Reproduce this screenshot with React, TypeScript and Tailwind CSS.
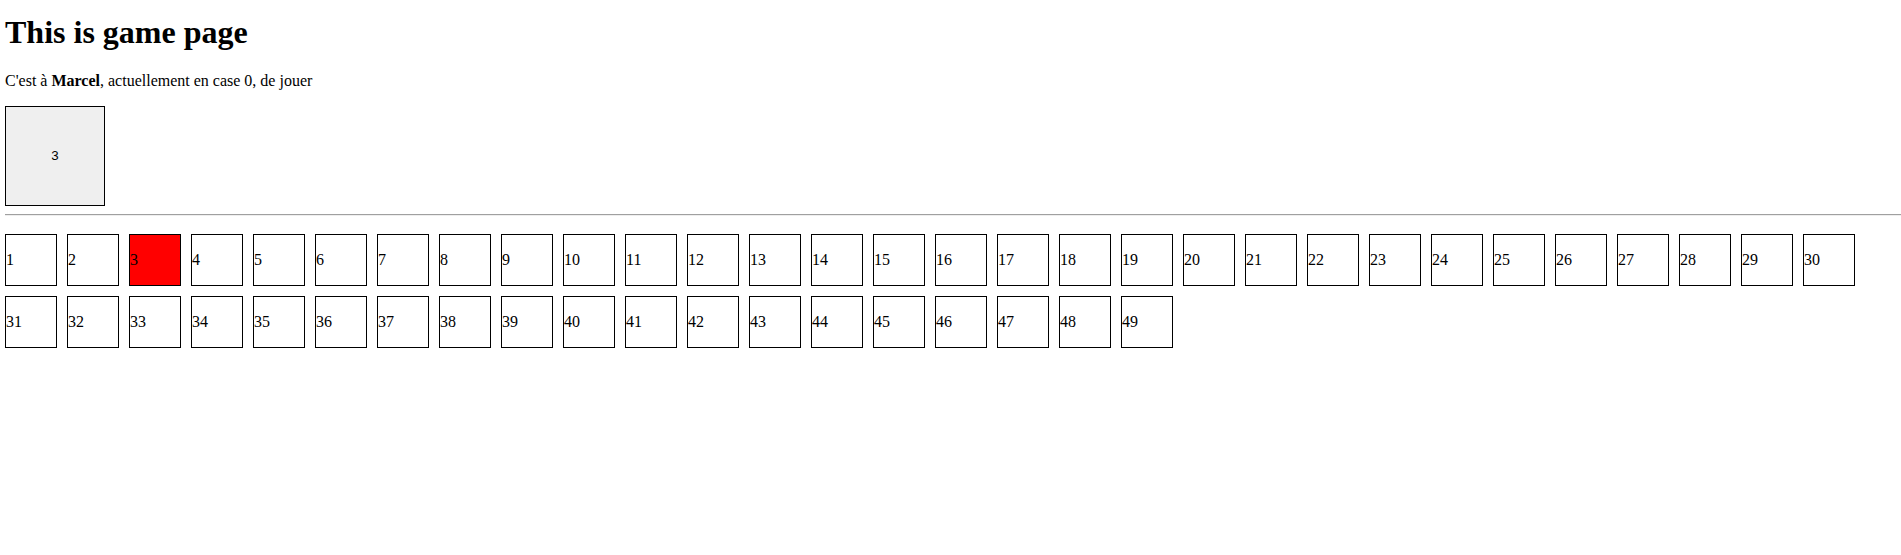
import React from "react";

const cases = Array.from({ length: 49 }, (_, i) => i + 1);

export default function App() {
  const current = 3;
  return (
    <div className="pl-[5px] bg-white text-black font-['Liberation_Serif',serif] min-h-[555px]">
      <h1 className="mt-[14px] mb-[21px] text-[32px] leading-[1.15] font-bold">This is game page</h1>
      <p className="text-[16px] leading-[1.15] mb-[16px]">
        C'est à <b>Marcel</b>, actuellement en case 0, de jouer
      </p>
      <div className="flex">
        <button className="w-[100px] h-[100px] bg-[#efefef] border border-black text-[13.33px] font-['Liberation_Sans',Arial,sans-serif] flex items-center justify-center">
          {current}
        </button>
      </div>
      <div className="mt-[8px] h-[2px] border-t border-t-[#a0a0a0] border-b border-b-[#eeeeee]" />
      <div className="mt-[18px] flex flex-wrap gap-[10px] w-[1860px]">
        {cases.map((n) => (
          <div
            key={n}
            className={`w-[52px] h-[52px] border border-black flex items-center text-[16px] leading-none ${
              n === current ? "bg-[#ff0000]" : "bg-white"
            }`}
          >
            {n}
          </div>
        ))}
      </div>
    </div>
  );
}
